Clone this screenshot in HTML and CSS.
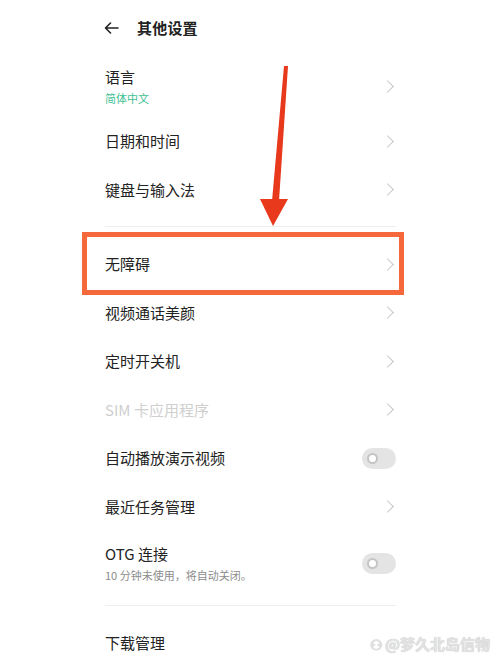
FILE: index.html
```html
<!DOCTYPE html>
<html lang="zh-CN">
<head>
    <meta charset="UTF-8">
    <meta name="viewport" content="width=device-width, initial-scale=1.0">
    <title>其他设置</title>
    <link rel="stylesheet" href="styles.css">
</head>
<body>
    <div class="screen">
        <header class="top-bar">
            <svg class="back" width="15" height="12" viewBox="0 0 15 12">
                <path d="M14 6H1.5M6.5 1L1.5 6l5 5" fill="none" stroke="#222" stroke-width="1.6" stroke-linecap="round" stroke-linejoin="round"/>
            </svg>
            <h1>其他设置</h1>
        </header>

        <ul class="list">
            <li class="row tall">
                <div class="texts">
                    <span class="label">语言</span>
                    <span class="sub green">简体中文</span>
                </div>
                <span class="chevron"></span>
            </li>
            <li class="row"><span class="label">日期和时间</span><span class="chevron"></span></li>
            <li class="row"><span class="label">键盘与输入法</span><span class="chevron"></span></li>
        </ul>

        <div class="divider first"></div>

        <ul class="list">
            <li class="row"><span class="label">无障碍</span><span class="chevron"></span></li>
            <li class="row"><span class="label">视频通话美颜</span><span class="chevron"></span></li>
            <li class="row"><span class="label">定时开关机</span><span class="chevron"></span></li>
            <li class="row"><span class="label disabled">SIM 卡应用程序</span><span class="chevron"></span></li>
            <li class="row"><span class="label">自动播放演示视频</span><span class="switch"></span></li>
            <li class="row"><span class="label">最近任务管理</span><span class="chevron"></span></li>
            <li class="row otg">
                <div class="texts">
                    <span class="label">OTG 连接</span>
                    <span class="sub">10 分钟未使用，将自动关闭。</span>
                </div>
                <span class="switch"></span>
            </li>
        </ul>

        <div class="divider second"></div>

        <ul class="list">
            <li class="row"><span class="label">下载管理</span></li>
        </ul>

        <!-- annotation drawn over the screenshot -->
        <div class="highlight"></div>
        <svg class="pointer" width="40" height="170" viewBox="0 0 40 170">
            <polygon points="32,0 36,0 27,135 20,135" fill="#e8391d"/>
            <polygon points="8,133 36,133 21,160" fill="#e8391d"/>
        </svg>

        <div class="watermark">
            <span class="wm-logo">⚇</span><span>@梦久北岛信物</span>
        </div>
    </div>
</body>
</html>
```

FILE: styles.css
```css
body {
    margin: 0;
    background: #fff;
    font-family: "Noto Sans CJK SC", "Noto Sans", sans-serif;
    color: #222;
}
.screen {
    position: relative;
    width: 500px;
    height: 666px;
    overflow: hidden;
    box-sizing: border-box;
    padding: 0 104px 0 105px;
}
.top-bar {
    height: 55px;
    display: flex;
    align-items: center;
    gap: 18px;
}
.top-bar .back {
    margin-left: -1px;
}
.top-bar h1 {
    margin: 0;
    font-size: 15px;
    font-weight: 700;
    letter-spacing: 0.2px;
}
.list {
    list-style: none;
    margin: 0;
    padding: 0;
}
.row {
    height: 48.5px;
    display: flex;
    align-items: center;
    justify-content: space-between;
}
.row.tall {
    height: 62px;
}
.row.otg {
    height: 64px;
}
.texts {
    display: flex;
    flex-direction: column;
    gap: 3px;
}
.label {
    font-size: 15px;
    line-height: 20px;
}
.label.disabled {
    color: #cfcfcf;
}
.sub {
    font-size: 11px;
    line-height: 16px;
    color: #8c8c8c;
}
.sub.green {
    color: #3fbf95;
}
.chevron {
    width: 8px;
    height: 8px;
    margin-right: 4px;
    border-top: 1.3px solid #c6c6c6;
    border-right: 1.3px solid #c6c6c6;
    transform: rotate(45deg);
}
.switch {
    position: relative;
    width: 34px;
    height: 21px;
    border-radius: 11px;
    background: #e4e4e4;
}
.switch::after {
    content: "";
    position: absolute;
    left: 5px;
    top: 5px;
    width: 7px;
    height: 7px;
    border-radius: 50%;
    background: #fff;
    border: 2px solid #c4c4c4;
}
.divider {
    height: 1px;
    background: #eeeeee;
}
.divider.first {
    margin: 12px 0 13px;
}
.divider.second {
    margin: 10px 0 13px;
}
.highlight {
    position: absolute;
    left: 82px;
    top: 232px;
    width: 312px;
    height: 53px;
    border: 5px solid #f4683b;
}
.pointer {
    position: absolute;
    left: 252px;
    top: 66px;
}
.watermark {
    position: absolute;
    right: 10px;
    top: 633px;
    display: flex;
    align-items: center;
    gap: 2px;
    font-size: 15px;
    font-weight: 700;
    color: #e2e2e2;
    text-shadow: 0 0 1px #bbb;
}
.wm-logo {
    font-size: 14px;
}
```
